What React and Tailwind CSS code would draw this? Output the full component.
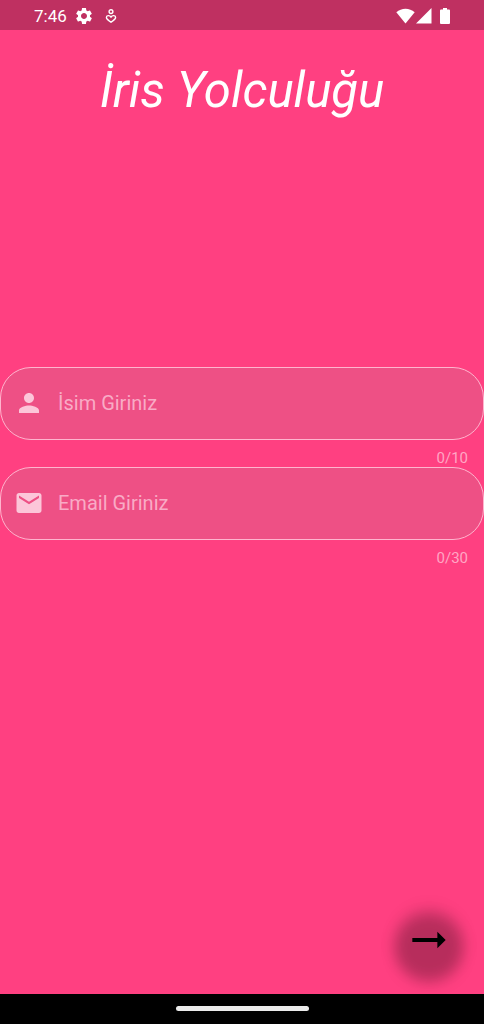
import React from 'react';

function StatusBar() {
  return (
    <header className="flex h-[30px] items-center justify-between bg-[#bf3061] pt-[2px] pr-[34px] pl-[34px] text-white">
      <div className="flex items-center">
        <time className="text-[17px] leading-5">7:46</time>
        <svg className="ml-[7px] size-5" viewBox="0 0 24 24" fill="currentColor" aria-hidden="true">
          <path d="M19.14 12.94c.04-.3.06-.61.06-.94 0-.32-.02-.64-.07-.94l2.03-1.58c.18-.14.23-.41.12-.61l-1.92-3.32c-.12-.22-.37-.29-.59-.22l-2.39.96c-.5-.38-1.03-.7-1.62-.94l-.36-2.54c-.04-.24-.24-.41-.48-.41h-3.84c-.24 0-.43.17-.47.41l-.36 2.54c-.59.24-1.13.57-1.62.94l-2.39-.96c-.22-.08-.47 0-.59.22L2.74 8.87c-.12.21-.08.47.12.61l2.03 1.58c-.05.3-.09.63-.09.94s.02.64.07.94l-2.03 1.58c-.18.14-.23.41-.12.61l1.92 3.32c.12.22.37.29.59.22l2.39-.96c.5.38 1.03.7 1.62.94l.36 2.54c.05.24.24.41.48.41h3.84c.24 0 .44-.17.47-.41l.36-2.54c.59-.24 1.13-.56 1.62-.94l2.39.96c.22.08.47 0 .59-.22l1.92-3.32c.12-.22.07-.47-.12-.61l-2.01-1.58zM12 15.6c-1.98 0-3.6-1.62-3.6-3.6s1.62-3.6 3.6-3.6 3.6 1.62 3.6 3.6-1.62 3.6-3.6 3.6z" />
        </svg>
        <svg className="ml-[11px] h-4 w-3" viewBox="0 0 12 16" fill="none" stroke="currentColor" strokeWidth="1.4" aria-hidden="true">
          <circle cx="6" cy="3.6" r="1.9" />
          <path d="M6 9.2C4.7 6.9 1.3 7.3 1.4 9.6c.1 1.5 2 2.8 4.6 4.6 2.6-1.8 4.5-3.1 4.6-4.6.1-2.3-3.3-2.7-4.6-.4z" strokeLinejoin="round" />
        </svg>
      </div>
      <div className="flex items-center">
        <svg className="h-4 w-5" viewBox="0 0 20 16" fill="currentColor" aria-hidden="true">
          <path d="M9.500 15.500.3 4.300C3 2 6.100.8 9.500.8s6.500 1.200 9.200 3.500z" />
        </svg>
        <svg className="size-4" viewBox="0 0 16 16" fill="currentColor" aria-hidden="true">
          <path d="M0 15.500 15.500 0v15.500z" />
        </svg>
        <svg className="ml-2 h-4 w-[10px]" viewBox="0 0 10 16" fill="currentColor" aria-hidden="true">
          <path d="M3 0h4v1.600h2a1 1 0 0 1 1 1V15a1 1 0 0 1-1 1H1a1 1 0 0 1-1-1V2.600a1 1 0 0 1 1-1h2z" />
        </svg>
      </div>
    </header>
  );
}

function Field({ id, label, type, max, icon }) {
  const [value, setValue] = React.useState('');
  return (
    <div className="h-[100px]">
      <div className="flex h-[73px] items-center gap-[14px] rounded-[31px] border border-[#ffb5ce] bg-[#ee5085] px-[13px] pb-px text-[#fcc6d9]">
        <label htmlFor={id} className="shrink-0">
          <svg className="size-[30px]" viewBox="0 0 24 24" fill="currentColor" aria-hidden="true">
            <path d={icon} />
          </svg>
        </label>
        <input
          id={id}
          type={type}
          aria-label={label}
          placeholder={label}
          maxLength={max}
          value={value}
          onChange={(e) => setValue(e.target.value)}
          className="min-w-0 flex-1 bg-transparent text-xl text-white outline-none placeholder:text-[#f9abc6]"
        />
      </div>
      <p className="mt-[7px] pr-4 text-right text-[15px] leading-[22px] text-[#ffa6c4]">
        {value.length}/{max}
      </p>
    </div>
  );
}

export default function App() {
  return (
    <div className="flex min-h-screen flex-col bg-[#ff4081] font-['Roboto',sans-serif]">
      <StatusBar />
      <main className="flex flex-1 flex-col">
        <h1 className="pt-[31px] text-center text-[49px] leading-[60px] text-white italic">İris Yolculuğu</h1>
        <form className="mt-[246px]">
          <Field
            id="name"
            label="İsim Giriniz"
            type="text"
            max={10}
            icon="M12 12c2.210 0 4-1.790 4-4s-1.790-4-4-4-4 1.790-4 4 1.790 4 4 4zm0 2c-2.670 0-8 1.340-8 4v2h16v-2c0-2.660-5.330-4-8-4z"
          />
          <Field
            id="email"
            label="Email Giriniz"
            type="email"
            max={30}
            icon="M20 4H4c-1.100 0-1.990.9-1.990 2L2 18c0 1.100.9 2 2 2h16c1.100 0 2-.9 2-2V6c0-1.100-.9-2-2-2zm0 4-8 5-8-5V6l8 5 8-5v2z"
          />
        </form>
        <div className="mt-auto flex justify-end pr-5 pb-[19px]">
          <button type="button" aria-label="Devam" className="relative flex size-[70px] items-center justify-center rounded-full">
            <span className="absolute top-[2px] left-0 size-[70px] rounded-full bg-black/10 blur-[7px]" />
            <span className="absolute top-[10px] left-[1px] size-[68px] rounded-full bg-black/20 blur-[7px]" />
            <svg className="relative size-[50px] text-black" viewBox="0 0 24 24" fill="currentColor" aria-hidden="true">
              <path d="M16.010 11H4v2h12.010v3L20 12l-3.990-4z" />
            </svg>
          </button>
        </div>
      </main>
      <footer className="flex h-[30px] items-center justify-center bg-black pb-px">
        <div className="h-[5px] w-[133px] rounded-full bg-[#ebebeb]" />
      </footer>
    </div>
  );
}
